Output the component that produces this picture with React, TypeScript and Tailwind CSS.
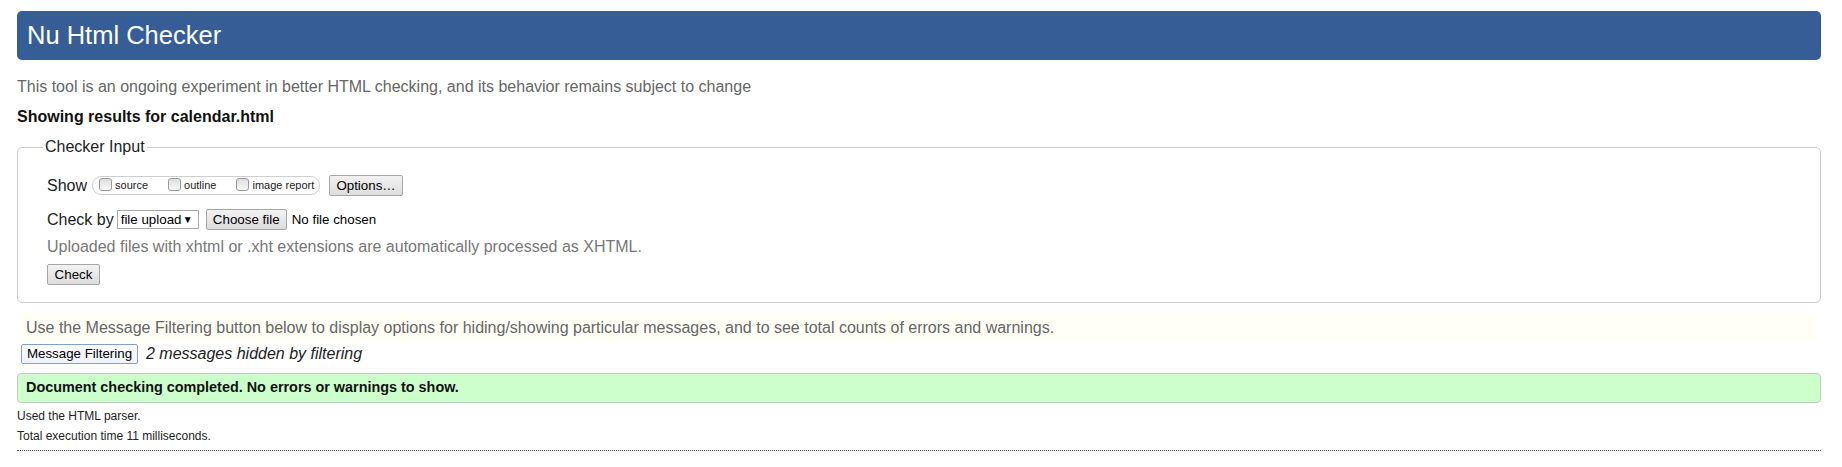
import React from "react";

function Btn({ children, className = "" }: { children: React.ReactNode; className?: string }) {
  return (
    <span
      className={
        "inline-flex h-[21px] items-center justify-center rounded-[2px] border border-[#a6a6a6] bg-[linear-gradient(#f2f2f2,#dddddd)] px-[6px] text-[13.33px] leading-none text-black " +
        className
      }
    >
      {children}
    </span>
  );
}

function Box({ label }: { label: string }) {
  return (
    <span className="flex items-center">
      <span className="mb-[2px] h-[13px] w-[13px] rounded-[3px] border border-[#9a9a9a] bg-[linear-gradient(#dedede,#f7f7f7)]" />
      <span className="ml-[3px] text-[11px] leading-none text-[#222]">{label}</span>
    </span>
  );
}

export default function App() {
  return (
    <div className="min-h-[467px] w-[1842px] bg-white font-['Liberation_Sans',Arial,sans-serif] text-black">
      <div className="ml-[17px] w-[1804px] pt-[11px]">
        <div className="flex h-[49px] items-center rounded-[5px] bg-[#365d95] pl-[10px]">
          <h1 className="text-[25.5px] font-normal leading-none text-white">Nu Html Checker</h1>
        </div>

        <p className="mt-[17px] text-[16px] leading-[20px] text-[#666]">
          This tool is an ongoing experiment in better HTML checking, and its behavior remains subject to change
        </p>

        <p className="mt-[10px] text-[16px] font-bold leading-[20px] text-[#111]">
          Showing results for calendar.html
        </p>

        <fieldset className="mt-[11px] rounded-[5px] border border-[#cccccc] pb-[17px] pl-[25px] pr-[10px] pt-0">
          <legend className="px-[2px] text-[16px] leading-[18px] text-[#222]">Checker Input</legend>
          <div className="pl-[4px]">
            <div className="mt-[19px] flex h-[21px] items-center">
              <span className="text-[16px] leading-none text-[#222]">Show</span>
              <span className="ml-[5px] flex h-[19px] w-[228px] items-center gap-[20px] rounded-[9px] border border-[#cfcfcf] pl-[6px]">
                <Box label="source" />
                <Box label="outline" />
                <Box label="image report" />
              </span>
              <Btn className="ml-[9px] w-[74px]">Options…</Btn>
            </div>

            <div className="mt-[13px] flex h-[21px] items-center">
              <span className="text-[16px] leading-none text-[#222]">Check by</span>
              <span className="ml-[3px] flex h-[19px] w-[82px] items-center justify-between border border-[#a9a9a9] bg-white pl-[3px] pr-[5px] text-[13.33px] leading-none text-black">
                <span>file upload</span>
                <span className="text-[10px]">▼</span>
              </span>
              <Btn className="ml-[7px] w-[81px]">Choose file</Btn>
              <span className="ml-[5px] text-[13.33px] leading-none text-black">No file chosen</span>
            </div>

            <p className="mt-[7px] text-[16px] leading-[20px] text-[#777]">
              Uploaded files with xhtml or .xht extensions are automatically processed as XHTML.
            </p>

            <div className="mt-[7px] flex h-[21px]">
              <Btn className="w-[53px]">Check</Btn>
            </div>
          </div>
        </fieldset>

        <div className="ml-[4px] mr-[4px] mt-[10px] flex h-[29px] items-center bg-[#fffff6] pl-[5px] text-[16px] text-[#666]">
          Use the Message Filtering button below to display options for hiding/showing particular messages, and to see total counts of errors and warnings.
        </div>

        <div className="ml-[4px] mt-[2px] flex h-[20px] items-center">
          <span className="inline-flex h-[20px] w-[117px] items-center justify-center rounded-[2px] border border-[#7da2ce] bg-[linear-gradient(#fdfeff,#eef4fb)] text-[13.33px] leading-none text-black">
            Message Filtering
          </span>
          <span className="ml-[8px] text-[16px] italic leading-none text-[#222]">2 messages hidden by filtering</span>
        </div>

        <div className="mt-[9px] flex h-[30px] items-center rounded-[4px] border border-[#c8c8c8] bg-[#ccffcc] pl-[8px] text-[14.4px] font-bold text-[#111]">
          Document checking completed. No errors or warnings to show.
        </div>

        <p className="mt-[3px] text-[12px] leading-[20px] text-[#222]">Used the HTML parser.</p>
        <p className="text-[12px] leading-[20px] text-[#222]">Total execution time 11 milliseconds.</p>

        <div className="mt-[4px] border-t border-dotted border-[#555]" />
      </div>
    </div>
  );
}
